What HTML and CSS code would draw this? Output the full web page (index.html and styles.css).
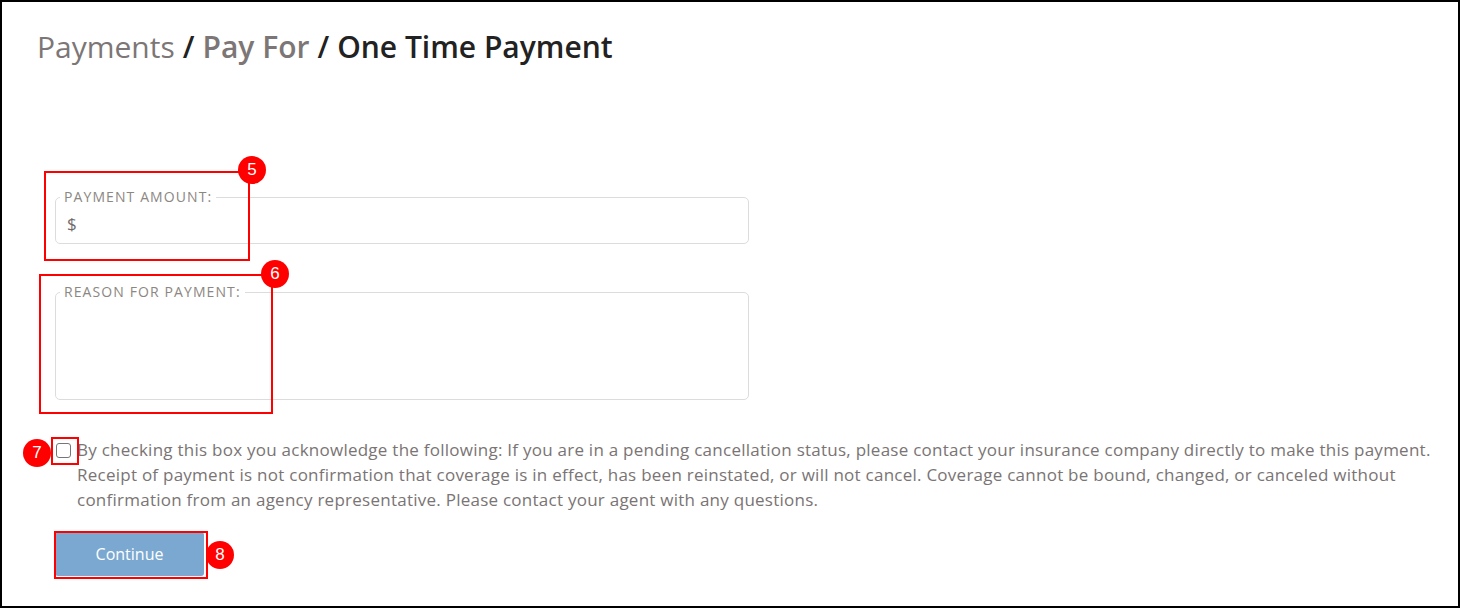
FILE: index.html
```html
<!DOCTYPE html>
<html lang="en">
<head>
<meta charset="utf-8">
<title>One Time Payment</title>
<link rel="stylesheet" href="styles.css">
</head>
<body>
<div class="frame">
  <h1 class="crumbs">
    <span class="crumb-first">Payments</span>
    <span class="sep">/</span>
    <span class="crumb-mid">Pay For</span>
    <span class="sep">/</span>
    <span class="crumb-current">One Time Payment</span>
  </h1>

  <form class="pay-form">
    <fieldset class="field field-amount">
      <legend>Payment Amount:</legend>
      <input class="amount-input" type="text" value="$">
    </fieldset>

    <fieldset class="field field-reason">
      <legend>Reason for Payment:</legend>
      <textarea class="reason-input"></textarea>
    </fieldset>

    <label class="ack">
      <input class="ack-box" type="checkbox">
      <span class="ack-text">By checking this box you acknowledge the following: If you are in a pending cancellation status, please contact your insurance company directly to make this payment. Receipt of payment is not confirmation that coverage is in effect, has been reinstated, or will not cancel. Coverage cannot be bound, changed, or canceled without confirmation from an agency representative. Please contact your agent with any questions.</span>
    </label>

    <button class="continue" type="button">Continue</button>
  </form>

  <div class="mark mark-5"><span class="badge">5</span></div>
  <div class="mark mark-6"><span class="badge">6</span></div>
  <div class="mark mark-7"><span class="badge badge-left">7</span></div>
  <div class="mark mark-8"><span class="badge badge-right">8</span></div>
</div>
</body>
</html>
```
FILE: styles.css
```css
* { box-sizing: border-box; }

html, body {
  margin: 0;
  padding: 0;
  background: #fff;
}

.frame {
  position: relative;
  width: 1460px;
  height: 608px;
  border: 2px solid #000;
  padding: 0 18px 0 35px;
  font-family: "Open Sans", "Liberation Sans", sans-serif;
  overflow: hidden;
}

.crumbs {
  margin: 25px 0 0 0;
  font-size: 30px;
  line-height: 40px;
  font-weight: 600;
  color: #222;
  display: flex;
  gap: 8px;
  white-space: nowrap;
}

.crumb-first {
  font-weight: 400;
  color: #7d7676;
}

.crumb-mid {
  color: #7d7676;
}

.sep { color: #222; }

.pay-form {
  margin: 121px 0 0 18px;
  display: flex;
  flex-direction: column;
  align-items: flex-start;
}

.field {
  margin: 0;
  width: 694px;
  border: 1px solid #dcdcdc;
  border-radius: 5px;
  padding: 0 10px 7px 10px;
  min-inline-size: 0;
}

.field legend {
  margin-left: -6px;
  padding: 0 4px;
  font-size: 14px;
  line-height: 18px;
  letter-spacing: 1.1px;
  text-transform: uppercase;
  color: #8c8782;
}

.amount-input {
  display: block;
  width: 100%;
  height: 30px;
  border: none;
  outline: none;
  padding: 5px 0 0 1px;
  font-family: inherit;
  font-size: 17px;
  color: #6f6a6a;
  background: transparent;
}

.field-reason {
  margin-top: 39px;
}

.reason-input {
  display: block;
  width: 100%;
  height: 91px;
  border: none;
  outline: none;
  resize: none;
  padding: 0;
  font-family: inherit;
  font-size: 16px;
  background: transparent;
}

.ack {
  margin-top: 37px;
  display: flex;
  align-items: flex-start;
  gap: 6px;
  font-size: 17px;
  line-height: 25px;
  letter-spacing: 0.25px;
  color: #7a7474;
}

.ack-box {
  appearance: none;
  -webkit-appearance: none;
  flex: none;
  width: 15px;
  height: 15px;
  margin: 6px 0 0 1px;
  border: 1px solid #767676;
  border-radius: 3px;
  background: #fff;
}

.continue {
  margin-top: 20px;
  width: 149px;
  height: 44px;
  border: none;
  border-radius: 3px;
  background: #7ba8d0;
  color: #fff;
  font-family: inherit;
  font-size: 16px;
}

/* annotation overlays */
.mark {
  position: absolute;
  border: 2px solid #ff0000;
}

.mark-5 { left: 42px; top: 169px; width: 206px; height: 90px; }
.mark-6 { left: 37px; top: 272px; width: 234px; height: 140px; }
.mark-7 { left: 49px; top: 435px; width: 28px; height: 28px; }
.mark-8 { left: 52px; top: 529px; width: 154px; height: 48px; }

.badge {
  position: absolute;
  width: 28px;
  height: 28px;
  border-radius: 50%;
  background: #ff0000;
  color: #fff;
  font-family: "Liberation Sans", Arial, sans-serif;
  font-size: 17px;
  line-height: 28px;
  text-align: center;
  right: -18px;
  top: -17px;
}

.mark-6 .badge { right: -18px; top: -16px; }
.badge-left { right: auto; left: -30px; top: 0; }
.badge-right { right: -28px; top: 8px; }
```
